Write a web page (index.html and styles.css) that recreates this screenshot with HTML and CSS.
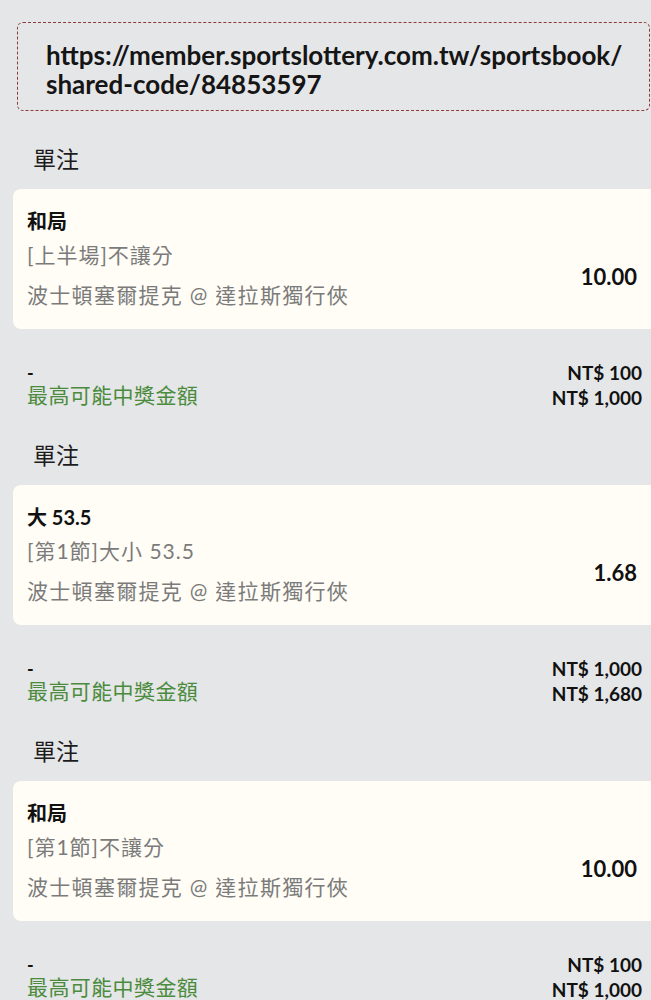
FILE: index.html
```html
<!DOCTYPE html>
<html lang="zh-Hant">
<head>
<meta charset="utf-8">
<title>Shared code</title>
<link rel="stylesheet" href="styles.css">
</head>
<body>
<div class="page">
  <div class="link-box">https://member.sportslottery.com.tw/sportsbook/<br>shared-code/84853597</div>

  <section class="group">
    <div class="group-title">單注</div>
    <div class="bet-card">
      <div class="bet-info">
        <div class="bet-pick">和局</div>
        <div class="bet-market">[上半場]不讓分</div>
        <div class="bet-match">波士頓塞爾提克 @ 達拉斯獨行俠</div>
      </div>
      <div class="bet-odds">10.00</div>
    </div>
    <div class="summary">
      <div class="summary-left">
        <div class="summary-dash">-</div>
        <div class="summary-label">最高可能中獎金額</div>
      </div>
      <div class="summary-right">
        <div>NT$ 100</div>
        <div>NT$ 1,000</div>
      </div>
    </div>
  </section>

  <section class="group">
    <div class="group-title">單注</div>
    <div class="bet-card">
      <div class="bet-info">
        <div class="bet-pick">大 53.5</div>
        <div class="bet-market">[第1節]大小 53.5</div>
        <div class="bet-match">波士頓塞爾提克 @ 達拉斯獨行俠</div>
      </div>
      <div class="bet-odds">1.68</div>
    </div>
    <div class="summary">
      <div class="summary-left">
        <div class="summary-dash">-</div>
        <div class="summary-label">最高可能中獎金額</div>
      </div>
      <div class="summary-right">
        <div>NT$ 1,000</div>
        <div>NT$ 1,680</div>
      </div>
    </div>
  </section>

  <section class="group">
    <div class="group-title">單注</div>
    <div class="bet-card">
      <div class="bet-info">
        <div class="bet-pick">和局</div>
        <div class="bet-market">[第1節]不讓分</div>
        <div class="bet-match">波士頓塞爾提克 @ 達拉斯獨行俠</div>
      </div>
      <div class="bet-odds">10.00</div>
    </div>
    <div class="summary">
      <div class="summary-left">
        <div class="summary-dash">-</div>
        <div class="summary-label">最高可能中獎金額</div>
      </div>
      <div class="summary-right">
        <div>NT$ 100</div>
        <div>NT$ 1,000</div>
      </div>
    </div>
  </section>
</div>
</body>
</html>
```

FILE: styles.css
```css
html, body {
  margin: 0;
  padding: 0;
  background: #e5e6e8;
}

body {
  font-family: Lato, "Noto Sans CJK TC", sans-serif;
  color: #111;
}

.page {
  padding-top: 22px;
}

.link-box {
  margin-left: 17px;
  margin-right: 1px;
  border: 1px dashed #8e3b3b;
  border-radius: 6px;
  padding: 18px 8px 11px 28px;
  font-size: 26px;
  line-height: 29px;
  font-weight: 700;
  color: #151515;
  margin-bottom: 28px;
}

.group {
  margin-bottom: 25px;
}

.group-title {
  padding-left: 33px;
  font-size: 23px;
  line-height: 40px;
  color: #1c1c1c;
  margin-bottom: 10px;
}

.bet-card {
  margin-left: 13px;
  background: #fffdf6;
  border-radius: 8px 0 0 8px;
  display: flex;
  justify-content: space-between;
  padding: 18px 14px 20px 14px;
}

.bet-info {
  display: flex;
  flex-direction: column;
}

.bet-pick {
  font-size: 20px;
  line-height: 28px;
  font-weight: 700;
  color: #111;
}

.bet-market {
  margin-top: 6px;
  font-size: 21px;
  line-height: 28px;
  letter-spacing: 1px;
  color: #7b7b7b;
}

.bet-match {
  margin-top: 12px;
  font-size: 21px;
  line-height: 28px;
  letter-spacing: 1.3px;
  color: #7b7b7b;
}

.bet-odds {
  align-self: flex-end;
  margin-bottom: 19px;
  font-size: 22px;
  line-height: 26px;
  font-weight: 700;
  color: #111;
}

.summary {
  margin-top: 31px;
  display: flex;
  justify-content: space-between;
  padding-left: 27px;
  padding-right: 9px;
}

.summary-left {
  font-size: 21px;
  letter-spacing: 0.4px;
}

.summary-dash {
  padding-top: 3px;
  font-weight: 700;
  font-size: 18px;
  line-height: 20px;
  color: #111;
}

.summary-label {
  line-height: 24px;
  color: #4b8b3c;
}

.summary-right {
  text-align: right;
  font-size: 19px;
  line-height: 25px;
  font-weight: 700;
  color: #111;
}
```
